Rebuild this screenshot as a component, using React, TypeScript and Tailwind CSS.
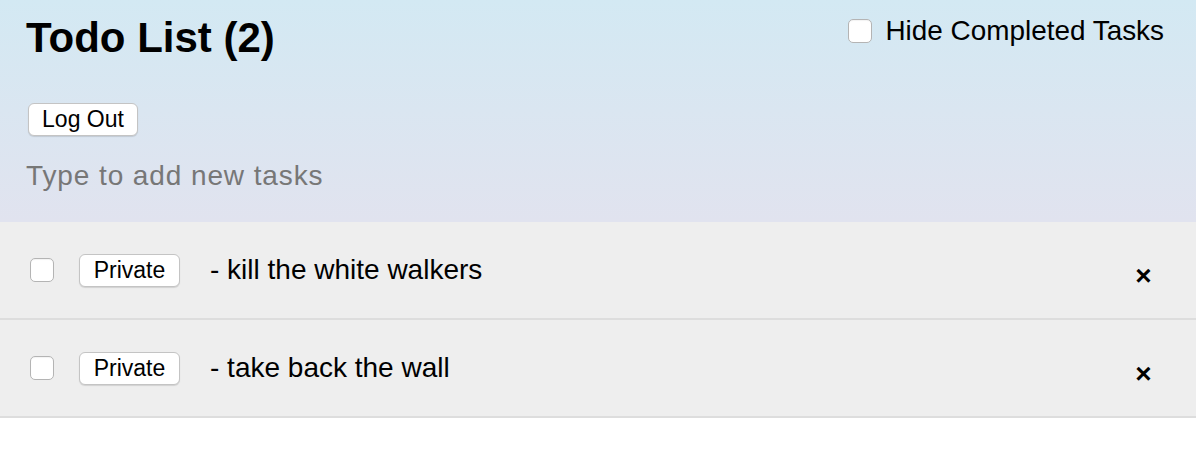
import React from "react";

const font = { fontFamily: '"Liberation Sans", Arial, Helvetica, sans-serif' };

function Box() {
  return (
    <span className="block w-[24px] h-[24px] shrink-0 rounded-[5px] border border-[#b4b4b4] bg-white shadow-[inset_0_1px_1px_rgba(0,0,0,0.05)]" />
  );
}

function Btn({ label, w }: { label: string; w: string }) {
  return (
    <button
      className={`flex ${w} h-[33px] items-center justify-center rounded-[6px] border border-[#c4c4c4] bg-white text-[23px] leading-none text-black shadow-[0_1px_1px_rgba(0,0,0,0.12)]`}
    >
      {label}
    </button>
  );
}

function Task({ text }: { text: string }) {
  return (
    <li className="flex h-[98px] items-center border-b-2 border-[#dddddd] bg-[#eeeeee] pl-[30px] pr-[44px]">
      <Box />
      <div className="ml-[25px]">
        <Btn label="Private" w="w-[101px]" />
      </div>
      <span className="ml-[30px] text-[28px] leading-[32px] text-black">{text}</span>
      <span className="ml-auto mt-[12px] w-[17px] text-center text-[28px] font-bold leading-[32px] text-black">×</span>
    </li>
  );
}

export default function App() {
  return (
    <div className="w-[1196px] min-h-[454px] bg-white" style={font}>
      <header className="h-[222px] bg-gradient-to-b from-[#d3e9f3] to-[#e1e3ef] pl-[26px] pr-[32px] pt-[14px]">
        <div className="flex items-start justify-between">
          <h1 className="text-[42px] font-bold leading-[48px] text-black">Todo List (2)</h1>
          <label className="flex h-[32px] items-center gap-[13px] pt-[2px]">
            <Box />
            <span className="text-[27.9px] leading-[32px] text-black">Hide Completed Tasks</span>
          </label>
        </div>
        <div className="ml-[2px] mt-[41px]">
          <Btn label="Log Out" w="w-[110px]" />
        </div>
        <div className="mt-[24px] text-[28px] leading-[32px] tracking-[0.9px] text-[#777777]">Type to add new tasks</div>
      </header>
      <ul>
        <Task text="- kill the white walkers" />
        <Task text="- take back the wall" />
      </ul>
    </div>
  );
}
